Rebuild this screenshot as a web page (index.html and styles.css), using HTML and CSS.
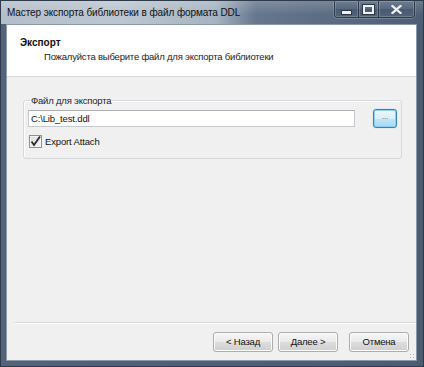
FILE: index.html
```html
<!DOCTYPE html>
<html lang="ru">
<head>
<meta charset="utf-8">
<title>Мастер экспорта</title>
<link rel="stylesheet" href="styles.css">
</head>
<body>
<div class="window">
  <div class="titlebar">
    <span class="title">Мастер экспорта библиотеки в файл формата DDL</span>
    <div class="caption-buttons">
      <div class="cbtn cmin"><span class="min-glyph"></span></div>
      <div class="cbtn cmax"><span class="max-glyph"></span></div>
      <div class="cbtn cclose">
        <svg width="11" height="9" viewBox="0 0 11 9"><path d="M1.5 1 L9.5 8 M9.5 1 L1.5 8" stroke="#eef2f6" stroke-width="2.2" stroke-linecap="square"/></svg>
      </div>
    </div>
  </div>
  <div class="client">
    <div class="header">
      <div class="h-title">Экспорт</div>
      <div class="h-sub">Пожалуйста выберите файл для экспорта библиотеки</div>
    </div>
    <div class="content">
      <fieldset class="group">
        <legend class="legend">Файл для экспорта</legend>
        <div class="file-row">
          <div class="input">C:\Lib_test.ddl</div>
          <div class="browse">...</div>
        </div>
        <label class="check-row">
          <span class="checkbox">
            <svg width="11" height="11" viewBox="0 0 11 11"><path d="M1.5 5.5 L4 9 L10 0.5" fill="none" stroke="#2b2b2b" stroke-width="1.8"/></svg>
          </span>
          <span class="check-label">Export Attach</span>
        </label>
      </fieldset>
    </div>
    <div class="footer">
      <div class="btn">&lt; Назад</div>
      <div class="btn">Далее &gt;</div>
      <div class="btn btn-cancel">Отмена</div>
      <div class="grip"></div>
    </div>
  </div>
</div>
</body>
</html>
```

FILE: styles.css
```css
* { box-sizing: border-box; }
html, body { margin: 0; padding: 0; }
body {
  width: 424px;
  height: 367px;
  overflow: hidden;
  font-family: "Liberation Sans", Arial, sans-serif;
  font-size: 9.5px;
  letter-spacing: -0.2px;
  color: #1e1e1e;
}
.window {
  width: 424px;
  height: 367px;
  display: flex;
  flex-direction: column;
  background: linear-gradient(to right, #53647a 0, #4c5d73 100%);
  border: 1px solid #2e3a4a;
}
.titlebar {
  height: 23px;
  flex: none;
  display: flex;
  align-items: flex-start;
  justify-content: space-between;
  background:
    linear-gradient(to bottom, rgba(255,255,255,0.18) 0, rgba(255,255,255,0) 60%),
    linear-gradient(to right, #b3bec9 0, #bcc6d0 120px, #a6b3c0 215px, #65768d 255px, #4d5e75 100%);
}
.title {
  padding: 6px 0 0 6px;
  font-size: 10px;
  letter-spacing: -0.1px;
  color: #101010;
  white-space: nowrap;
}
.caption-buttons {
  display: flex;
  margin-right: 8px;
  border: 1px solid #2f3b4a;
  border-top: none;
  border-radius: 0 0 4px 4px;
  overflow: hidden;
  height: 17px;
  box-shadow: 0 1px 0 rgba(255,255,255,0.2), -1px 0 0 rgba(255,255,255,0.15), 1px 0 0 rgba(255,255,255,0.15);
}
.cbtn {
  height: 16px;
  display: flex;
  align-items: center;
  justify-content: center;
  background: linear-gradient(to bottom, #6c7c91 0, #57687e 50%, #4a5a70 51%, #52637a 100%);
  box-shadow: inset 0 0 0 1px rgba(255,255,255,0.18);
}
.cmin { width: 24px; border-right: 1px solid #2f3b4a; }
.cmax { width: 20px; border-right: 1px solid #2f3b4a; }
.cclose { width: 35px; }
.min-glyph {
  display: block;
  width: 9px;
  height: 3px;
  margin-top: 6px;
  background: #eef2f6;
  border: 1px solid #2c3846;
  box-sizing: content-box;
}
.max-glyph {
  display: block;
  width: 7px;
  height: 5px;
  border: 2px solid #eef2f6;
  outline: 1px solid #2c3846;
  box-sizing: content-box;
}
.client {
  flex: 1;
  margin: 1px 7px 6px 6px;
  background: #f0f0f0;
  display: flex;
  flex-direction: column;
  box-shadow: 0 0 0 1px #8b99aa;
}
.header {
  height: 52px;
  flex: none;
  background: #fff;
  border-bottom: 1px solid #d8d8d8;
  padding: 11px 0 0 13px;
}
.h-title {
  font-weight: bold;
  font-size: 10px;
  letter-spacing: 0;
  color: #111;
  line-height: 13px;
}
.h-sub {
  margin-top: 1px;
  padding-left: 24px;
  line-height: 13px;
  color: #222;
}
.content {
  flex: 1;
  padding: 17px 15px 0 16px;
}
.group {
  margin: 0;
  padding: 2px 4px 9px 4px;
  border: 1px solid #d5d9dc;
  border-radius: 3px;
  box-shadow: 1px 1px 0 #fff inset;
  height: 65px;
}
.legend {
  padding: 0 1px;
  margin-left: 2px;
  color: #222;
  line-height: 13px;
}
.file-row {
  display: flex;
  align-items: center;
}
.input {
  width: 327px;
  height: 17px;
  background: #fff;
  border: 1px solid #c5c9ce;
  border-top-color: #abadb3;
  padding: 1px 0 0 2px;
  letter-spacing: -0.15px;
  line-height: 13px;
  color: #111;
}
.browse {
  margin-left: 18px;
  width: 24px;
  height: 19px;
  border: 1px solid #3c7fb1;
  border-radius: 3px;
  background: linear-gradient(to bottom, #eaf6fd 0, #d9f0fc 50%, #bee6fd 51%, #a7d9f5 100%);
  box-shadow: inset 0 0 0 1px #8fd0f2, 0 0 1px #68b4e0;
  font-size: 8px;
  letter-spacing: 0;
  line-height: 14px;
  text-align: center;
  color: #444;
}
.check-row {
  display: flex;
  align-items: center;
  margin-top: 7px;
  margin-left: 1px;
}
.checkbox {
  width: 13px;
  height: 13px;
  border: 1px solid #8e8f8f;
  background: linear-gradient(to bottom right, #dcdcdc 0, #f5f5f5 100%);
  box-shadow: inset 0 0 0 1px #f4f4f4;
  display: flex;
  align-items: center;
  justify-content: center;
}
.check-label {
  margin-left: 3px;
  letter-spacing: -0.15px;
  color: #111;
}
.footer {
  height: 38px;
  flex: none;
  border-top: 1px solid #d5d5d5;
  box-shadow: inset 0 1px 0 #fff;
  margin-left: 8px;
  padding: 9px 0 0 198px;
  display: flex;
  align-items: flex-start;
  gap: 5px;
  position: relative;
}
.btn {
  width: 60px;
  height: 20px;
  border: 1px solid #adadad;
  border-radius: 3px;
  background: linear-gradient(to bottom, #f6f6f6 0, #eaeaea 50%, #dddddd 51%, #cfcfcf 100%);
  box-shadow: inset 0 0 0 1px #fbfbfb;
  line-height: 18px;
  text-align: center;
  color: #111;
}
.btn-cancel { margin-left: 6px; }
.grip {
  position: absolute;
  right: 1px;
  bottom: 1px;
  width: 6px;
  height: 6px;
  background:
    radial-gradient(circle, #b8b8b8 0.8px, transparent 1px) 0 0 / 3px 3px;
}
```
